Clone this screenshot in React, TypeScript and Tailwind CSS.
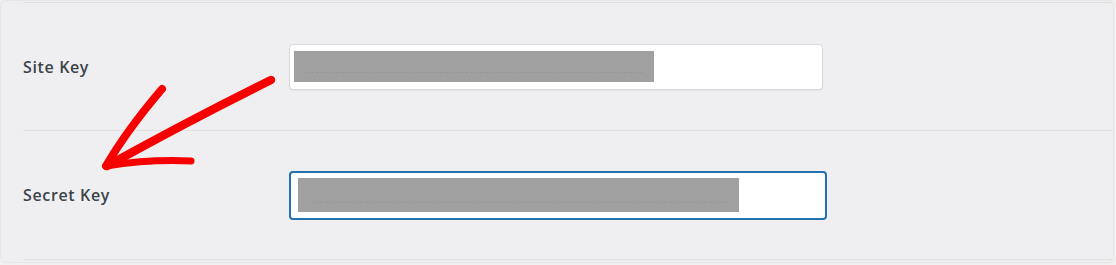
import React from "react";

function KeyInput({ focused, barWidth }: { focused?: boolean; barWidth: number }) {
  return (
    <div
      className={
        focused
          ? "flex h-[49px] w-[538px] items-center rounded-[4px] border-2 border-[#2271b1] bg-white pl-[7px]"
          : "flex h-[46px] w-[534px] items-center rounded-[4px] border border-[#d8d8dc] bg-white pl-[4px] shadow-[0_1px_1px_rgba(0,0,0,0.04)]"
      }
    >
      <div
        className={
          (focused ? "h-[34px]" : "h-[31px]") +
          " flex items-end bg-[#a0a0a0] px-[12px] pb-[9px]"
        }
        style={{ width: barWidth }}
      >
        <div className="h-0 w-full border-b border-dashed border-[#979797]" />
      </div>
    </div>
  );
}

function Row({ label, children }: { label: string; children: React.ReactNode }) {
  return (
    <div className="ml-[22px] flex items-center border-t border-[#e0e0e3]">
      <div
        className="w-[266px] text-[16px] font-semibold tracking-[0.04em] text-[#3c434a]"
        style={{ fontFamily: '"Open Sans", "Noto Sans", sans-serif' }}
      >
        {label}
      </div>
      {children}
    </div>
  );
}

export default function App() {
  return (
    <div className="relative h-[265px] w-[1116px] overflow-hidden bg-[#f0f0f1]">
      <div className="flex h-[263px] w-[1114px] flex-col rounded-[6px] border border-[#e6e6e9] bg-[#efeff1] pt-px">
        <div className="flex h-[128px] flex-col [&>div]:h-full">
          <Row label="Site Key">
            <KeyInput barWidth={360} />
          </Row>
        </div>
        <div className="flex h-[129px] flex-col [&>div]:h-full">
          <Row label="Secret Key">
            <KeyInput focused barWidth={441} />
          </Row>
        </div>
        <div className="ml-[22px] border-t border-[#e0e0e3]" />
      </div>
      <svg
        className="pointer-events-none absolute left-0 top-0"
        width="1116"
        height="265"
        viewBox="0 0 1116 265"
      >
        <g fill="none" stroke="#f70000" strokeLinecap="round" strokeLinejoin="round">
          <path d="M271 80 Q190 120 107 166" strokeWidth="8.5" />
          <path d="M162 89 Q127 130 106 166" strokeWidth="8" />
          <path d="M106 166 Q150 159 191 161" strokeWidth="7" />
        </g>
      </svg>
    </div>
  );
}
